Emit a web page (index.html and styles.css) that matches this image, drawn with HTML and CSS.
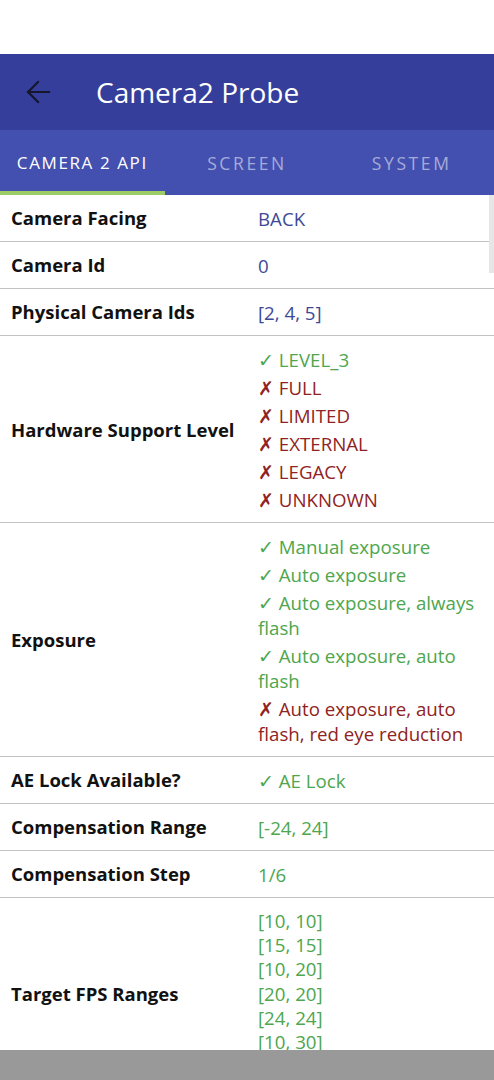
FILE: index.html
```html
<!DOCTYPE html>
<html>
<head>
<meta charset="utf-8">
<link rel="stylesheet" href="styles.css">
</head>
<body>
<div class="status"></div>
<header class="appbar">
  <svg class="back" width="26" height="26" viewBox="0 0 26 26"><path d="M24 13H3M13 3L3 13l10 10" fill="none" stroke="#15172a" stroke-width="2.2" stroke-linecap="square"/></svg>
  <h1 class="title">Camera2 Probe</h1>
</header>
<nav class="tabs">
  <div class="tab active">CAMERA 2 API</div>
  <div class="tab">SCREEN</div>
  <div class="tab">SYSTEM</div>
</nav>
<main class="list">
  <div class="row"><div class="label">Camera Facing</div><div class="value blue">BACK</div></div>
  <div class="row"><div class="label">Camera Id</div><div class="value blue">0</div></div>
  <div class="row"><div class="label">Physical Camera Ids</div><div class="value blue">[2, 4, 5]</div></div>
  <div class="row multi"><div class="label">Hardware Support Level</div>
    <div class="value items">
      <div class="item ok"><span class="mark">✓</span> LEVEL_3</div>
      <div class="item no"><span class="mark">✗</span> FULL</div>
      <div class="item no"><span class="mark">✗</span> LIMITED</div>
      <div class="item no"><span class="mark">✗</span> EXTERNAL</div>
      <div class="item no"><span class="mark">✗</span> LEGACY</div>
      <div class="item no"><span class="mark">✗</span> UNKNOWN</div>
    </div>
  </div>
  <div class="row multi"><div class="label">Exposure</div>
    <div class="value items">
      <div class="item ok"><span class="mark">✓</span> Manual exposure</div>
      <div class="item ok"><span class="mark">✓</span> Auto exposure</div>
      <div class="item ok"><span class="mark">✓</span> Auto exposure, always<br>flash</div>
      <div class="item ok"><span class="mark">✓</span> Auto exposure, auto<br>flash</div>
      <div class="item no"><span class="mark">✗</span> Auto exposure, auto<br>flash, red eye reduction</div>
    </div>
  </div>
  <div class="row"><div class="label">AE Lock Available?</div><div class="value green"><span class="mark">✓</span> AE Lock</div></div>
  <div class="row"><div class="label">Compensation Range</div><div class="value green">[-24, 24]</div></div>
  <div class="row"><div class="label">Compensation Step</div><div class="value green">1/6</div></div>
  <div class="row multi fps"><div class="label">Target FPS Ranges</div>
    <div class="value green ranges">
      <div>[10, 10]</div>
      <div>[15, 15]</div>
      <div>[10, 20]</div>
      <div>[20, 20]</div>
      <div>[24, 24]</div>
      <div>[10, 30]</div>
      <div>[15, 30]</div>
    </div>
  </div>
</main>
<div class="scrollbar"></div>
<div class="navbar"></div>
</body>
</html>
```
FILE: styles.css
```css
html, body {
  margin: 0;
  padding: 0;
  background: #ffffff;
  font-family: "Open Sans", "Noto Sans", sans-serif;
  height: 1080px;
  overflow: hidden;
}

.status {
  height: 54px;
  background: #ffffff;
}

.appbar {
  height: 76px;
  background: #353f9b;
  display: flex;
  align-items: center;
  padding-left: 25px;
  box-sizing: border-box;
}

.back {
  display: block;
  flex: none;
}

.title {
  margin: 0 0 0 45px;
  font-size: 28px;
  font-weight: 500;
  color: #ffffff;
}

.tabs {
  height: 65px;
  background: #4350b0;
  display: grid;
  grid-template-columns: repeat(3, 1fr);
}

.tab {
  display: flex;
  align-items: center;
  justify-content: center;
  font-size: 17.5px;
  font-weight: 500;
  letter-spacing: 2.6px;
  color: #a6abd7;
  box-sizing: border-box;
}

.tab.active {
  color: #ffffff;
  font-size: 17px;
  letter-spacing: 1.6px;
  border-bottom: 4px solid #9ccc65;
  padding-top: 4px;
}

.list {
  display: flex;
  flex-direction: column;
}

.row {
  display: grid;
  grid-template-columns: 247px 1fr;
  padding-left: 11px;
  min-height: 46px;
  border-bottom: 1px solid #c2c2c2;
  align-items: center;
}

.row.multi {
  padding-top: 11px;
  padding-bottom: 10px;
}

.label {
  font-size: 18.5px;
  font-weight: 700;
  color: #111111;
  margin-top: -1px;
}

.value {
  font-size: 18.7px;
  line-height: 25px;
}

.blue { color: #3d4996; }
.green { color: #4ea64e; }

.item {
  margin-top: 3px;
  line-height: 25px;
}
.item:first-child { margin-top: 0; }
.item.ok { color: #4ea64e; }
.item.no { color: #8f2323; }

.mark {
  font-family: "DejaVu Sans", sans-serif;
  font-size: 19px;
  line-height: 0;
}

.ranges {
  line-height: 24.2px;
}

.scrollbar {
  position: absolute;
  top: 195px;
  right: 0;
  width: 5px;
  height: 78px;
  background: #e6e6e6;
}

.navbar {
  position: fixed;
  left: 0;
  right: 0;
  bottom: 0;
  height: 30px;
  background: #999999;
}
```
